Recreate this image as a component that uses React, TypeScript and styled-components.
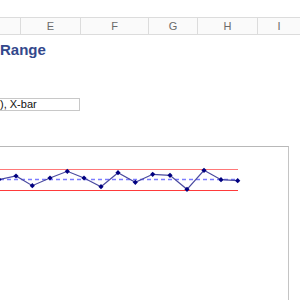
import React from "react";
import styled, { createGlobalStyle } from "styled-components";

const Global = createGlobalStyle`
  html, body { margin: 0; padding: 0; background: #fff; }
  body { font-family: "Liberation Sans", Arial, sans-serif; overflow: hidden; }
`;

const Page = styled.div`
  width: 300px;
  height: 300px;
  overflow: hidden;
  padding-top: 17px;
  box-sizing: border-box;
`;

const HeaderRow = styled.div`
  display: grid;
  grid-template-columns: 20px 60px 68px 49px 60px 43px;
  height: 18px;
  box-sizing: border-box;
  border-top: 1px solid #dcdcdc;
  border-bottom: 1px solid #dcdcdc;
  background: #fafafa;
`;

const HeaderCell = styled.div<{ $first?: boolean }>`
  border-left: ${(p) => (p.$first ? "none" : "1px solid #dcdcdc")};
  font-size: 11px;
  color: #6a6a6a;
  display: flex;
  align-items: center;
  justify-content: center;
  line-height: 16px;
`;

const Title = styled.div`
  margin-top: 6px;
  font-size: 15px;
  line-height: 18px;
  font-weight: bold;
  color: #33488c;
`;

const InputBox = styled.div`
  margin-top: 39px;
  width: 80px;
  height: 13px;
  box-sizing: border-box;
  border: 1px solid #c8c8c8;
  border-left: none;
  font-size: 11px;
  line-height: 11px;
  color: #111;
  white-space: nowrap;
  overflow: hidden;
`;

const ChartFrame = styled.div`
  margin-top: 35px;
  width: 289px;
  height: 200px;
  box-sizing: border-box;
  border-top: 1px solid #b8b8b8;
  border-right: 1px solid #c4c4c4;
`;

const PlotSvg = styled.svg`
  display: block;
`;

const points: [number, number][] = [
  [-1, 179.5],
  [16, 176],
  [32.3, 185.7],
  [50, 178],
  [67.3, 171.3],
  [84, 178],
  [101, 186.7],
  [118, 172.7],
  [135.3, 182.3],
  [152.7, 174.3],
  [170, 175.3],
  [187, 189.3],
  [204, 170.3],
  [221, 179.7],
  [237.7, 180.7],
];

const OFF = 147;

function Chart() {
  const pts = points.map(([x, y]) => [x, y - OFF] as [number, number]);
  return (
    <PlotSvg width={288} height={100} viewBox="0 0 288 100">
      <line x1={0} x2={238} y1={169.5 - OFF} y2={169.5 - OFF} stroke="#ff7878" strokeWidth={1} />
      <line x1={0} x2={238} y1={190.5 - OFF} y2={190.5 - OFF} stroke="#ff3a3a" strokeWidth={1} />
      <line
        x1={0}
        x2={238}
        y1={179.5 - OFF}
        y2={179.5 - OFF}
        stroke="#7c7cff"
        strokeWidth={1.5}
        strokeDasharray="4 3"
      />
      <polyline
        points={pts.map(([x, y]) => `${x},${y}`).join(" ")}
        fill="none"
        stroke="#4a4aa0"
        strokeWidth={1.2}
      />
      {pts.map(([x, y], i) => (
        <polygon
          key={i}
          points={`${x},${y - 2.6} ${x + 2.6},${y} ${x},${y + 2.6} ${x - 2.6},${y}`}
          fill="#000080"
        />
      ))}
    </PlotSvg>
  );
}

export default function App() {
  return (
    <Page>
      <Global />
      <HeaderRow>
        <HeaderCell $first />
        <HeaderCell>E</HeaderCell>
        <HeaderCell>F</HeaderCell>
        <HeaderCell>G</HeaderCell>
        <HeaderCell>H</HeaderCell>
        <HeaderCell>I</HeaderCell>
      </HeaderRow>
      <Title>Range</Title>
      <InputBox>), X-bar</InputBox>
      <ChartFrame>
        <Chart />
      </ChartFrame>
    </Page>
  );
}
